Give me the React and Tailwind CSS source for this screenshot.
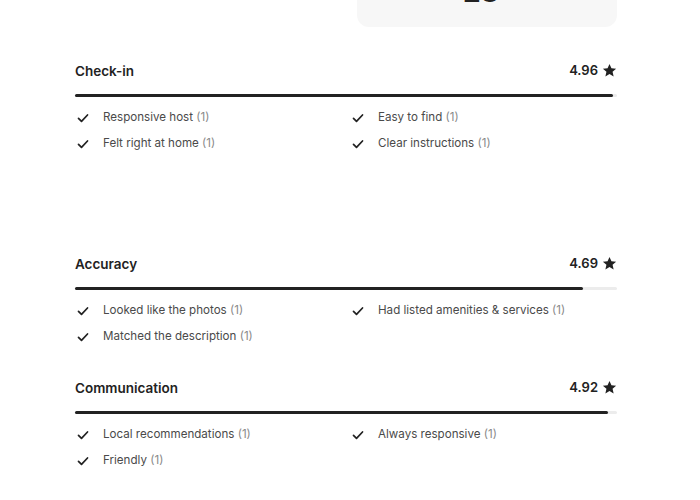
import React from 'react';

const sections = [
  {
    title: 'Check-in',
    rating: 4.96,
    items: [
      ['Responsive host', 1],
      ['Easy to find', 1],
      ['Felt right at home', 1],
      ['Clear instructions', 1],
    ],
    gap: 'mt-[34px]',
  },
  {
    title: 'Accuracy',
    rating: 4.69,
    items: [
      ['Looked like the photos', 1],
      ['Had listed amenities & services', 1],
      ['Matched the description', 1],
    ],
    gap: 'mt-[97px]',
  },
  {
    title: 'Communication',
    rating: 4.92,
    items: [
      ['Local recommendations', 1],
      ['Always responsive', 1],
      ['Friendly', 1],
    ],
    gap: 'mt-[28px]',
  },
];

function Check() {
  return (
    <svg width="12" height="12" viewBox="0 0 16 16" fill="none" className="shrink-0">
      <path d="M2 8.5 L6 12.5 L14 4" stroke="#222" strokeWidth="2.3" strokeLinecap="round" strokeLinejoin="round" />
    </svg>
  );
}

function Star() {
  return (
    <svg width="15" height="15" viewBox="0 0 24 24" className="shrink-0 -mt-[2px]">
      <path
        d="M12 1.5 L15.1 8.4 L22.6 9.1 L16.9 14.1 L18.6 21.5 L12 17.6 L5.4 21.5 L7.1 14.1 L1.4 9.1 L8.9 8.4 Z"
        fill="#222"
      />
    </svg>
  );
}

export default function App() {
  return (
    <div
      className="w-[700px] h-[500px] overflow-hidden bg-white text-[#222]"
      style={{ fontFamily: 'Inter, "Noto Sans", sans-serif' }}
    >
      {/* bottom of the card above, cut by the frame */}
      <div className="flex justify-end pr-[83px]">
        <div className="w-[260px] h-[27px] rounded-b-xl bg-[#f7f7f7] overflow-hidden flex justify-center">
          <span className="text-[28px] font-bold leading-none -mt-[22px] -ml-[12px]">28</span>
        </div>
      </div>

      <div className="pl-[75px] pr-[83px]">
        {sections.map((s) => (
          <section key={s.title} className={s.gap}>
            <div className="flex items-center justify-between h-[20px]">
              <h2 className="text-[13.5px] font-semibold">{s.title}</h2>
              <div className="flex items-center gap-[4px] text-[13px] font-semibold">
                <span>{s.rating.toFixed(2)}</span>
                <Star />
              </div>
            </div>
            <div className="mt-[13px] h-[3px] rounded-full bg-[#ececec]">
              <div className="h-full rounded-full bg-[#222]" style={{ width: `${(s.rating / 5) * 100}%` }} />
            </div>
            <div className="mt-[8px] grid grid-cols-[275px_1fr]">
              {s.items.map(([label, n]) => (
                <div key={label} className="flex items-center h-[26px] pl-[2px]">
                  <Check />
                  <span className="ml-[14px] text-[11.6px] text-[#4a4a4a]">
                    {label} <span className="text-[#8a8a8a]">({n})</span>
                  </span>
                </div>
              ))}
            </div>
          </section>
        ))}
      </div>
    </div>
  );
}
